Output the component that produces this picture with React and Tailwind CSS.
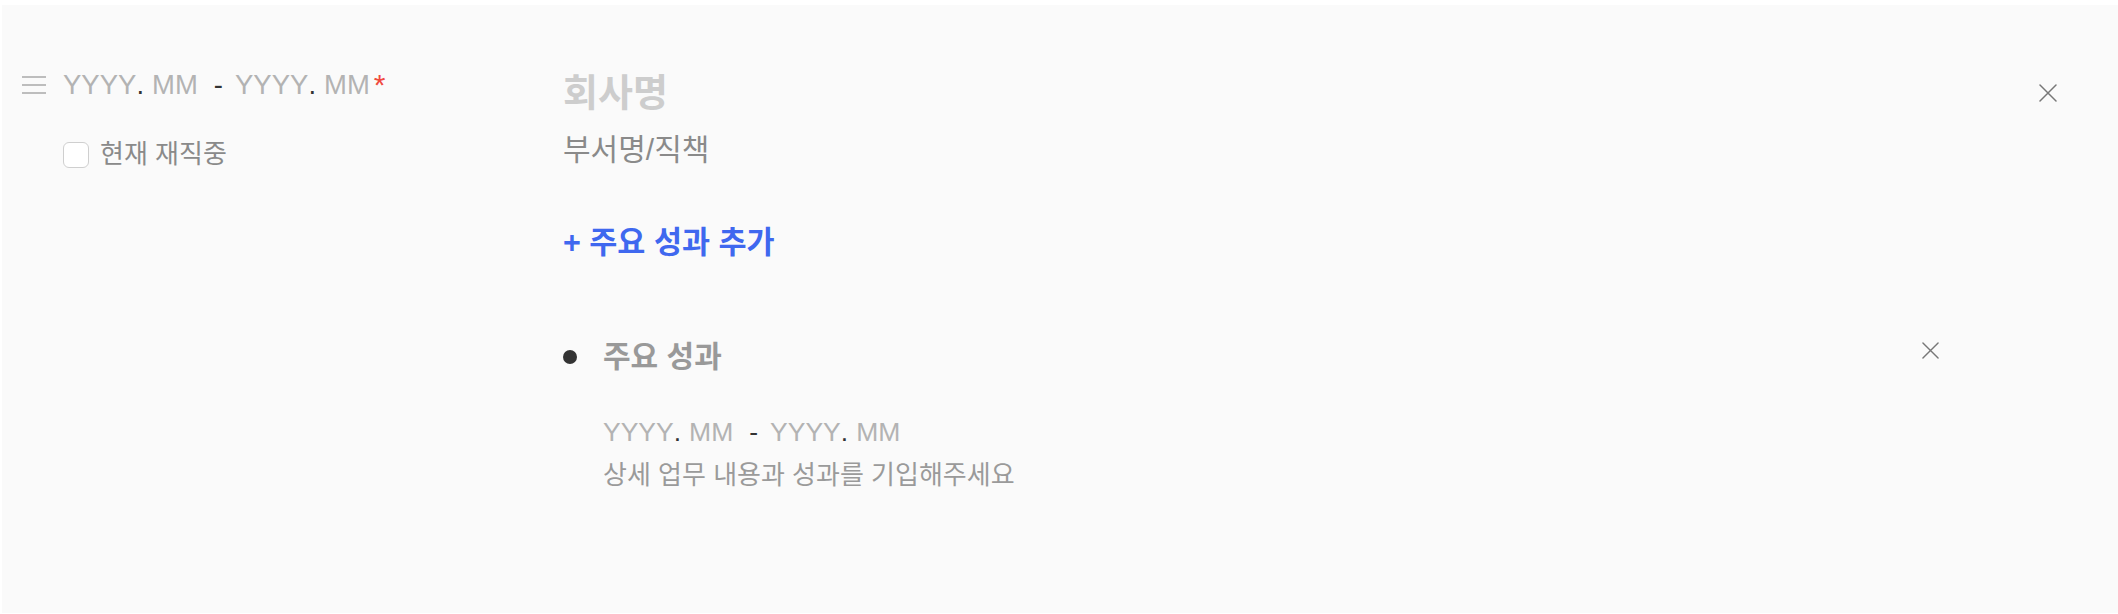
import React from "react";

const FONT = { fontFamily: '"Liberation Sans", "Noto Sans CJK KR", sans-serif' };

function XIcon({ className }) {
  return (
    <svg viewBox="0 0 18 18" className={className} fill="none" stroke="#777" strokeWidth="1.5" strokeLinecap="round">
      <path d="M1 1 L17 17 M17 1 L1 17" />
    </svg>
  );
}

function DateRange({ size = "text-[27px]" }) {
  return (
    <div className={`flex items-center ${size} leading-[36px]`}>
      <span className="text-[#b3b3b3]">YYYY</span>
      <span className="text-[#333]">.</span>
      <span className="text-[#b3b3b3] ml-[8px]">MM</span>
      <span className="text-[#333] ml-[16px] mr-[12px]">-</span>
      <span className="text-[#b3b3b3]">YYYY</span>
      <span className="text-[#333]">.</span>
      <span className="text-[#b3b3b3] ml-[8px]">MM</span>
    </div>
  );
}

export default function App() {
  return (
    <div className="w-[2118px] h-[614px] bg-white pt-[5px] pl-[2px]" style={FONT}>
      <div className="bg-[#fafafa] h-[608px] flex pl-[20px] pr-[61px] pt-[62px]">
        {/* left column */}
        <div className="w-[541px] flex flex-col">
          <div className="flex items-center h-[36px]">
            <div className="flex flex-col gap-[6.5px] w-[24px] mr-[17px]">
              <div className="h-[1.5px] bg-[#bdbdbd]" />
              <div className="h-[1.5px] bg-[#bdbdbd]" />
              <div className="h-[1.5px] bg-[#bdbdbd]" />
            </div>
            <DateRange size="text-[27.5px]" />
            <span className="text-[30px] leading-[36px] text-[#f04a3e] ml-[4px]">*</span>
          </div>
          <div className="flex items-center h-[36px] mt-[34px] pl-[41px]">
            <div className="w-[26px] h-[26px] rounded-[6px] border border-[#cfcfcf] bg-white mr-[11px]" />
            <span className="text-[26px] text-[#8a8a8a] leading-[36px] -mt-[3px]">현재 재직중</span>
          </div>
        </div>

        {/* right column */}
        <div className="flex-1 flex flex-col">
          <div className="flex items-start justify-between h-[44px] mt-[4px]">
            <span className="text-[38px] font-semibold text-[#cdcdcd] leading-[44px]">회사명</span>
            <XIcon className="w-[18px] h-[18px] mt-[13px]" />
          </div>
          <div className="h-[36px] mt-[17px] flex items-center">
            <span className="text-[30px] text-[#8a8a8a] leading-[36px]">부서명/직책</span>
          </div>
          <div className="h-[36px] mt-[56px] flex items-center">
            <span className="text-[30.5px] font-bold text-[#3f68ef] leading-[36px]">+ 주요 성과 추가</span>
          </div>

          <div className="mt-[79px] flex flex-col pr-[118px]">
            <div className="flex items-start justify-between">
              <div className="flex items-center h-[36px]">
                <div className="w-[14px] h-[14px] rounded-full bg-[#333] mr-[26px]" />
                <span className="text-[30px] font-bold text-[#999] leading-[36px]">주요 성과</span>
              </div>
              <XIcon className="w-[17px] h-[17px] mt-[3px]" />
            </div>
            <div className="pl-[40px] mt-[39px]">
              <DateRange size="text-[26.5px]" />
              <div className="h-[36px] mt-[7px] flex items-center">
                <span className="text-[26px] text-[#9a9a9a] leading-[36px]">상세 업무 내용과 성과를 기입해주세요</span>
              </div>
            </div>
          </div>
        </div>
      </div>
    </div>
  );
}
